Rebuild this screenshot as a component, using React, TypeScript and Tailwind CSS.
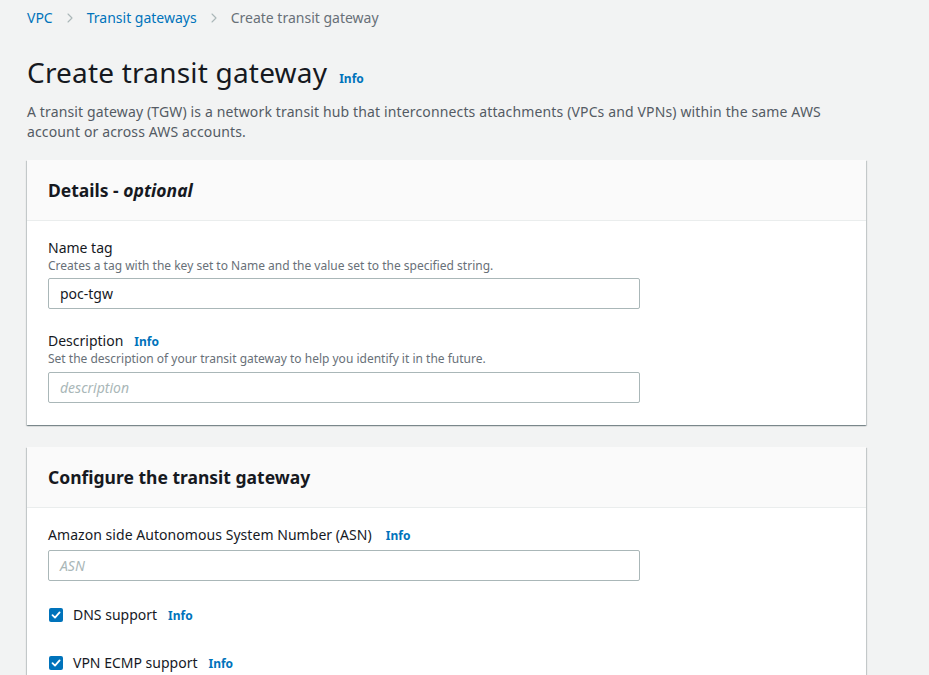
import { ChevronRight } from 'lucide-react';

const font = { fontFamily: '"Noto Sans", "Open Sans", Arial, sans-serif' };

function Info({ className = '' }: { className?: string }) {
  return <span className={`text-[12px] font-bold text-[#0073bb] ${className}`}>Info</span>;
}

function Card({ title, children }: { title: React.ReactNode; children: React.ReactNode }) {
  return (
    <section className="w-[839px] bg-white shadow-[0_1px_1px_0_rgba(0,28,36,0.3),1px_1px_1px_0_rgba(0,28,36,0.15),-1px_1px_1px_0_rgba(0,28,36,0.15)]">
      <div className="border-b border-[#eaeded] bg-[#fafafa] px-[21px] py-[19px]">
        <h2 className="text-[17.5px] font-bold leading-[22px] text-[#16191f]">{title}</h2>
      </div>
      <div className="px-[21px] pb-[22px] pt-[17px]">{children}</div>
    </section>
  );
}

function TextInput({ value, placeholder }: { value?: string; placeholder?: string }) {
  return (
    <div className="flex h-[31px] w-[592px] items-center rounded-[2px] border border-[#aab7b8] bg-white px-[11px] text-[14px]">
      {value ? (
        <span className="text-[#16191f]">{value}</span>
      ) : (
        <span className="italic text-[#aab7b8]">{placeholder}</span>
      )}
    </div>
  );
}

function Check({ label }: { label: string }) {
  return (
    <div className="flex h-5 items-baseline">
      <span className="ml-px flex h-[14px] w-[14px] self-center items-center justify-center rounded-[2px] bg-[#0073bb]">
        <svg width="10" height="10" viewBox="0 0 10 10" fill="none">
          <path d="M1.5 5.2 4 7.6 8.6 2.4" stroke="white" strokeWidth="1.8" strokeLinecap="round" strokeLinejoin="round" />
        </svg>
      </span>
      <span className="ml-[10px] text-[14px] leading-5 text-[#16191f]">{label}</span>
      <Info className="ml-[11px]" />
    </div>
  );
}

export default function App() {
  return (
    <div style={font} className="h-[675px] overflow-hidden bg-[#f2f3f3] px-[27px] pt-[8px]">
      <nav className="flex h-5 items-center text-[14px] leading-5">
        <span className="text-[#0073bb]">VPC</span>
        <ChevronRight className="mx-[9px] h-4 w-4 text-[#aab7b8]" strokeWidth={1.6} />
        <span className="text-[#0073bb]">Transit gateways</span>
        <ChevronRight className="mx-[9px] h-4 w-4 text-[#aab7b8]" strokeWidth={1.6} />
        <span className="text-[#687078]">Create transit gateway</span>
      </nav>

      <div className="mt-[26px] flex items-baseline">
        <h1 className="text-[28px] leading-[36px] font-normal tracking-[0.2px] text-[#16191f]">Create transit gateway</h1>
        <Info className="ml-[12px] text-[11px]" />
      </div>

      <p className="mt-[12px] w-[830px] text-[14px] leading-5 tracking-[0.14px] text-[#545b64]">
        A transit gateway (TGW) is a network transit hub that interconnects attachments (VPCs and VPNs) within the same AWS
        account or across AWS accounts.
      </p>

      <div className="mt-[18px] flex flex-col gap-[22px]">
        <Card
          title={
            <>
              Details - <i>optional</i>
            </>
          }
        >
          <div className="text-[14px] leading-5 text-[#16191f]">Name tag</div>
          <div className="text-[12px] leading-4 text-[#687078]">
            Creates a tag with the key set to Name and the value set to the specified string.
          </div>
          <div className="mt-[4px]">
            <TextInput value="poc-tgw" />
          </div>

          <div className="mt-[22px] flex h-5 items-baseline text-[14px] leading-5 text-[#16191f]">
            Description
            <Info className="ml-[11px]" />
          </div>
          <div className="text-[12px] leading-4 text-[#687078]">
            Set the description of your transit gateway to help you identify it in the future.
          </div>
          <div className="mt-[5px]">
            <TextInput placeholder="description" />
          </div>
        </Card>

        <Card title="Configure the transit gateway">
          <div className="flex h-5 items-baseline text-[14px] leading-5 tracking-[0.05px] text-[#16191f]">
            Amazon side Autonomous System Number (ASN)
            <Info className="ml-[14px]" />
          </div>
          <div className="mt-[5px]">
            <TextInput placeholder="ASN" />
          </div>
          <div className="mt-[24px] flex flex-col gap-[28px]">
            <Check label="DNS support" />
            <Check label="VPN ECMP support" />
          </div>
        </Card>
      </div>
    </div>
  );
}
